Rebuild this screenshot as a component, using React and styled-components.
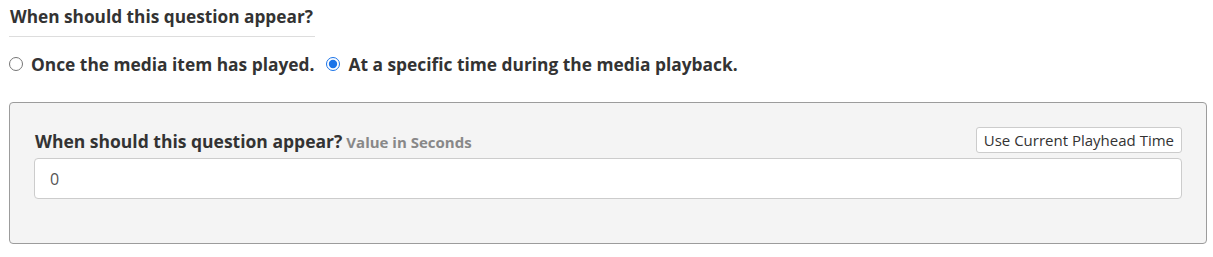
import React, { useState } from 'react';
import styled, { createGlobalStyle } from 'styled-components';

const GlobalStyle = createGlobalStyle`
  body {
    margin: 0;
    background: #fff;
    font-family: 'Open Sans', 'Noto Sans', sans-serif;
    color: #333;
  }
`

const Wrapper = styled.div`
  padding: 0 6px 0 9px;
`
const Heading = styled.h4`
  display: inline-block;
  margin: 0;
  padding: 6px 2px 8px 1px;
  font-size: 17.25px;
  line-height: 22px;
  font-weight: 700;
  color: #333;
  border-bottom: 1px solid #ddd;
`
const RadioRow = styled.div`
  display: flex;
  align-items: center;
  gap: 12px;
  margin-top: 16px;
  height: 22px;
`
const RadioLabel = styled.label`
  display: flex;
  align-items: center;
  gap: 8px;
  font-size: 17.35px;
  font-weight: 700;
  color: #333;
  cursor: pointer;
`
const Radio = styled.input`
  margin: 0;
  width: 14px;
  height: 14px;
  accent-color: #1a73e8;
`
const Panel = styled.div`
  margin-top: 27px;
  padding: 24px 24px 44px 24px;
  background: #f4f4f4;
  border: 1px solid #9c9c9c;
  border-radius: 4px;
`
const LabelRow = styled.div`
  display: flex;
  align-items: flex-end;
  justify-content: space-between;
  margin-bottom: 5px;
`
const FieldLabel = styled.label`
  padding-left: 1px;
  font-size: 17.5px;
  font-weight: 700;
  line-height: 22px;
  color: #333;
`
const Hint = styled.span`
  margin-left: 4px;
  font-size: 15px;
  font-weight: 700;
  color: #888;
`
const Button = styled.button`
  height: 26px;
  padding: 0 7px;
  background: #fff;
  border: 1px solid #ccc;
  border-radius: 3px;
  font-family: inherit;
  font-size: 15px;
  color: #333;
  cursor: pointer;
`
const Input = styled.input`
  display: block;
  box-sizing: border-box;
  width: 100%;
  height: 41px;
  padding: 0 15px;
  background: #fff;
  border: 1px solid #ccc;
  border-radius: 4px;
  font-family: inherit;
  font-size: 16px;
  color: #555;
  outline: none;
`

export default function App() {
  const [mode, setMode] = useState('time')
  const [seconds, setSeconds] = useState('0')
  return (
    <Wrapper>
      <GlobalStyle />
      <Heading>When should this question appear?</Heading>
      <RadioRow>
        <RadioLabel>
          <Radio type='radio' name='appear' checked={mode === 'played'} onChange={() => setMode('played')} />
          Once the media item has played.
        </RadioLabel>
        <RadioLabel>
          <Radio type='radio' name='appear' checked={mode === 'time'} onChange={() => setMode('time')} />
          At a specific time during the media playback.
        </RadioLabel>
      </RadioRow>
      <Panel>
        <LabelRow>
          <FieldLabel htmlFor='seconds'>
            When should this question appear?<Hint>Value in Seconds</Hint>
          </FieldLabel>
          <Button type='button'>Use Current Playhead Time</Button>
        </LabelRow>
        <Input id='seconds' value={seconds} onChange={e => setSeconds(e.target.value)} />
      </Panel>
    </Wrapper>
  )
}
